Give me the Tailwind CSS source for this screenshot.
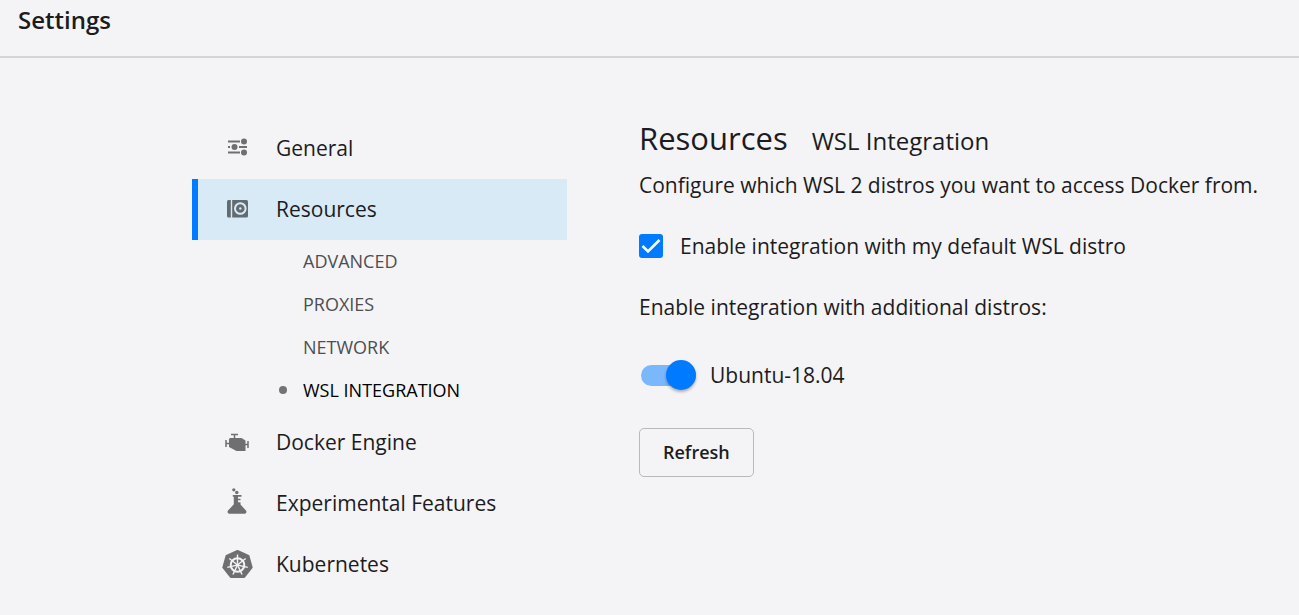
<!DOCTYPE html>
<html lang="en">
<head>
<meta charset="utf-8">
<meta name="viewport" content="width=device-width, initial-scale=1">
<title>Settings</title>
<script src="https://cdn.jsdelivr.net/npm/@tailwindcss/browser@4"></script>
</head>
<body class="min-h-screen bg-[#f4f4f6] font-['Open_Sans',sans-serif] text-[21px] leading-[30px] text-[#1c1c1e]">
<header class="border-b-2 border-[#d4d4d7] px-[18px] pt-[5px] pb-[21px]">
  <h1 class="text-[24px] leading-[30px] font-semibold">Settings</h1>
</header>
<div class="flex pt-[60px] pl-48 gap-[72px]">
  <nav class="w-[375px] shrink-0" aria-label="Settings sections">
    <ul>
      <li><a href="#general" class="flex h-[61px] items-center border-l-6 border-transparent pb-0.5 pl-[23px]">
        <svg class="mr-[23px] size-8 shrink-0 text-[#6f6f71]" viewBox="0 0 32 32" fill="currentColor" aria-hidden="true"><g stroke="currentColor" stroke-width="1.800"><path d="M7 9.500h12M7 15h2M18 15h8M7 20.500h12"/></g><circle cx="23" cy="9.500" r="3"/><circle cx="13.500" cy="15" r="3"/><circle cx="23" cy="20.500" r="3"/></svg>
        General</a></li>
      <li>
        <a href="#resources" class="flex h-[61px] items-center border-l-6 border-[#007bff] bg-[#d8eaf6] pb-0.5 pl-[23px]">
        <svg class="mr-[23px] size-8 shrink-0 text-[#626b71]" viewBox="0 0 32 32" fill="currentColor" aria-hidden="true"><path d="M7.500 7H9.800v17.500H7.500A1.500 1.500 0 0 1 6 23V8.500A1.500 1.500 0 0 1 7.500 7Z"/><path d="M11.200 7h14.300A1.500 1.500 0 0 1 27 8.500V23a1.500 1.500 0 0 1-1.500 1.500H11.200Z"/><circle cx="19.300" cy="15.500" r="5.300" fill="none" stroke="#d8eaf6" stroke-width="2"/><circle cx="19.300" cy="15.500" r="1.200" fill="#d8eaf6"/></svg>
        Resources</a>
        <ul class="text-[18px] text-[#4e4e50]">
          <li><a href="#advanced" class="flex h-[43px] items-center pb-0.5 pl-[111px]">ADVANCED</a></li>
          <li><a href="#proxies" class="flex h-[43px] items-center pb-0.5 pl-[111px]">PROXIES</a></li>
          <li><a href="#network" class="flex h-[43px] items-center pb-0.5 pl-[111px]">NETWORK</a></li>
          <li><a href="#wsl" aria-current="page" class="flex h-[43px] items-center gap-4 pb-0.5 pl-[87px] text-black"><span class="size-2 rounded-full bg-[#737375]"></span>WSL INTEGRATION</a></li>
        </ul>
      </li>
      <li><a href="#engine" class="flex h-[61px] items-center border-l-6 border-transparent pb-0.5 pl-[23px]">
        <svg class="mr-[23px] size-8 shrink-0 text-[#6f6f71]" viewBox="0 0 32 32" fill="currentColor" aria-hidden="true"><path d="M9 12h11.500l4 2.500v10.500H15.500l-7.500-4V13Z"/><g fill="none" stroke="currentColor" stroke-width="1.500"><path d="M10 8.500h7M13.500 8.500v4M5 14v7M5 17.500h4M24 18.500h3M27 15v7"/></g></svg>
        Docker Engine</a></li>
      <li><a href="#experimental" class="flex h-[61px] items-center border-l-6 border-transparent pb-0.5 pl-[23px]">
        <svg class="mr-[23px] size-8 shrink-0 text-[#6f6f71]" viewBox="0 0 32 32" fill="currentColor" aria-hidden="true"><circle cx="12.800" cy="2.800" r="1.600"/><circle cx="15.800" cy="5.500" r="1.700"/><path d="M11.800 8H20.500V9.800H17v2h2.500v1.400H17v2h2.500v2.200l5.700 6.400q.9 2.400-1.200 2.900H8q-2.100-.5-1.200-2.900l6-6.600V9.800h-1Z"/></svg>
        Experimental Features</a></li>
      <li><a href="#kubernetes" class="flex h-[61px] items-center border-l-6 border-transparent pb-0.5 pl-[23px]">
        <svg class="mr-[23px] size-8 shrink-0 text-[#6f6f71]" viewBox="0 0 32 32" aria-hidden="true"><path d="M16.500 3 27.500 8 30.700 19.500 23.200 29H9.800L2.300 19.500 5.500 8Z" fill="currentColor" stroke="currentColor" stroke-width="2" stroke-linejoin="round"/><g fill="none" stroke="#f4f4f6" stroke-width="1.400"><circle cx="16.500" cy="17" r="6.800" stroke-width="2"/><path id="spoke" d="M16.500 15.500V6.500"/><use href="#spoke" transform="rotate(51.430 16.500 17)"/><use href="#spoke" transform="rotate(102.860 16.500 17)"/><use href="#spoke" transform="rotate(154.290 16.500 17)"/><use href="#spoke" transform="rotate(205.710 16.500 17)"/><use href="#spoke" transform="rotate(257.140 16.500 17)"/><use href="#spoke" transform="rotate(308.570 16.500 17)"/></g><circle cx="16.500" cy="17" r="1.800" fill="#f4f4f6"/></svg>
        Kubernetes</a></li>
    </ul>
  </nav>
  <main class="min-w-0 flex-1">
    <div class="flex items-baseline gap-6">
      <h2 class="text-[31px] leading-[40px]">Resources</h2>
      <h3 class="text-[24px] leading-[40px]">WSL Integration</h3>
    </div>
    <p class="mt-[9px]">Configure which WSL 2 distros you want to access Docker from.</p>
    <label class="mt-[31px] flex items-center gap-[17px]">
      <span class="grid size-6">
        <input type="checkbox" checked class="peer col-start-1 row-start-1 size-6 appearance-none rounded-[3px] border-2 border-[#007bff] checked:bg-[#007bff]">
        <svg class="pointer-events-none invisible col-start-1 row-start-1 size-6 peer-checked:visible" viewBox="0 0 24 24" fill="none" stroke="#fff" stroke-width="2.500" aria-hidden="true"><path d="m3.500 12 5.500 5.500L20.500 6"/></svg>
      </span>
      Enable integration with my default WSL distro
    </label>
    <p class="mt-[31px]">Enable integration with additional distros:</p>
    <label class="mt-[38px] flex items-center gap-[14px]">
      <input type="checkbox" role="switch" checked class="ml-0.5 flex h-[21px] w-[55px] appearance-none items-center rounded-full bg-[#c4c4c7] before:size-[30px] before:shrink-0 before:rounded-full before:bg-white before:shadow-[0_2px_3px_rgba(0,0,0,0.3)] before:content-[''] checked:justify-end checked:bg-[#7ab8fb] checked:before:bg-[#007bff]">
      Ubuntu-18.04
    </label>
    <button type="button" class="mt-[38px] h-[49px] rounded-[5px] border border-[#b9b9bc] px-[23px] pb-0.5 text-[18px] font-semibold">Refresh</button>
  </main>
</div>
</body>
</html>
